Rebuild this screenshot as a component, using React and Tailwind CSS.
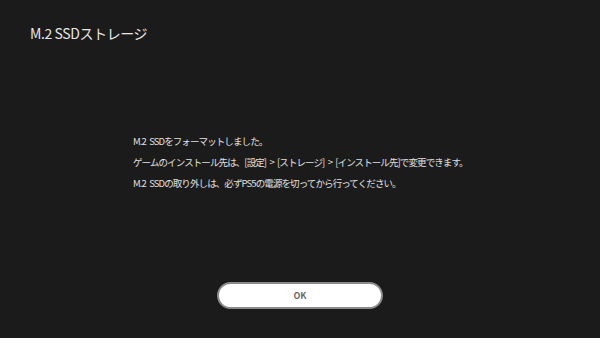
export default function App() {
  const font = { fontFamily: '"Noto Sans CJK JP", "Noto Sans", sans-serif' };
  return (
    <div className="w-[600px] h-[338px] bg-[#1b1b1b] text-[#e6e6e6] flex flex-col overflow-hidden" style={font}>
      <div className="pl-[30px] pt-[23px] text-[14px] leading-[20px] tracking-[-0.4px]">M.2 SSDストレージ</div>
      <div className="pl-[133px] mt-[91px] flex flex-col gap-[7px] text-[9.5px] leading-[14px] tracking-[-0.9px] [word-spacing:2px] text-[#e0e0e0]">
        <div>M.2 SSDをフォーマットしました。</div>
        <div>ゲームのインストール先は、[設定] &gt; [ストレージ] &gt; [インストール先]で変更できます。</div>
        <div>M.2 SSDの取り外しは、必ずPS5の電源を切ってから行ってください。</div>
      </div>
      <div className="mt-[92px] flex justify-center">
        <div className="w-[166px] h-[27px] rounded-full bg-white border-2 border-[#8a8a8a] flex items-center justify-center text-[9px] font-semibold text-[#6b6b6b]">
          OK
        </div>
      </div>
    </div>
  );
}
